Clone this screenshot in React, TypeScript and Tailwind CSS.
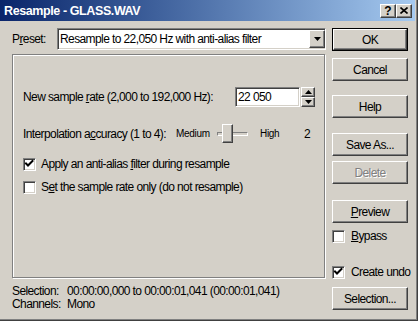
import React from 'react';

const raised =
  'border border-t-white border-l-white border-r-[#404040] border-b-[#404040] shadow-[inset_-1px_-1px_0_#808080,inset_1px_1px_0_#d4d0c8] bg-[#d4d0c8]';
const sunken =
  'border border-t-[#808080] border-l-[#808080] border-r-white border-b-white shadow-[inset_1px_1px_0_#404040,inset_-1px_-1px_0_#d4d0c8]';

const U: React.FC<{ children: React.ReactNode }> = ({ children }) => (
  <span className="underline underline-offset-[1px] decoration-1">{children}</span>
);

const Button: React.FC<{ children: React.ReactNode; className?: string; disabled?: boolean; isDefault?: boolean }> = ({
  children,
  className = '',
  disabled,
  isDefault,
}) => {
  const inner = (
    <div
      className={`${raised} flex h-full w-full items-center justify-center ${
        disabled ? 'text-[#808080] [text-shadow:1px_1px_0_#fff]' : 'text-black'
      }`}
    >
      {children}
    </div>
  );
  if (isDefault) {
    return <div className={`h-[23px] w-[76px] border border-black ${className}`}>{inner}</div>;
  }
  return <div className={`h-[23px] w-[76px] ${className}`}>{inner}</div>;
};

const Check: React.FC<{ checked?: boolean }> = ({ checked }) => (
  <div className={`${sunken} h-[13px] w-[13px] shrink-0 bg-white`}>
    {checked && (
      <svg width="11" height="11" viewBox="0 0 11 11" className="block">
        <path d="M2 4.5 L4 6.5 L8.5 2" stroke="#000" strokeWidth="2" fill="none" strokeLinecap="square" />
      </svg>
    )}
  </div>
);

const Arrow: React.FC<{ up?: boolean; size?: number }> = ({ up, size = 7 }) => {
  const h = Math.ceil(size / 2);
  return (
    <svg width={size} height={h} viewBox={`0 0 ${size} ${h}`} className="block">
      <polygon points={up ? `0,${h} ${size},${h} ${size / 2},0` : `0,0 ${size},0 ${size / 2},${h}`} fill="#000" />
    </svg>
  );
};

export default function App() {
  return (
    <div className="h-[321px] w-[418px] overflow-hidden whitespace-nowrap border-r border-b border-[#404040] bg-[#d4d0c8] pr-[2px] shadow-[inset_-1px_-1px_0_#808080] font-['Liberation_Sans',Arial,sans-serif] text-[12px] leading-[14px] tracking-[-0.6px] text-black">
      {/* Title bar */}
      <div className="flex h-[21px] items-center bg-gradient-to-r from-[#0a246a] to-[#a6caf0] pl-[4px] pr-[3px]">
        <span className="flex-1 text-[12.5px] font-bold tracking-[-0.4px] text-white">Resample - GLASS.WAV</span>
        <div className={`${raised} flex h-[14px] w-[16px] items-center justify-center text-[12px] font-bold leading-none tracking-normal`}>
          ?
        </div>
        <div className={`${raised} flex h-[14px] w-[16px] items-center justify-center`}>
          <svg width="8" height="7" viewBox="0 0 8 7">
            <path d="M0.5 0.5 L7.5 6.5 M7.5 0.5 L0.5 6.5" stroke="#000" strokeWidth="1.6" />
          </svg>
        </div>
      </div>

      <div className="flex pl-3 pt-[7px]">
        {/* Left column */}
        <div className="w-[314px]">
          <div className="flex h-[22px] items-center">
            <span className="w-[45px]">
              P<U>r</U>eset:
            </span>
            <div className={`${sunken} flex h-[22px] flex-1 items-center bg-white pl-[2px]`}>
              <span className="flex-1">Resample to 22,050 Hz with anti-alias filter</span>
              <div className={`${raised} flex h-[18px] w-[16px] items-center justify-center`}>
                <Arrow />
              </div>
            </div>
          </div>

          {/* Group panel */}
          <div className="mt-[4px] h-[224px] w-[313px] border border-[#808080] pl-[10px] pr-[9px] pt-[32px] shadow-[inset_1px_1px_0_#fff,1px_1px_0_#fff]">
            <div className="flex h-[20px] items-center">
              <span className="flex-1">
                New sample <U>r</U>ate (2,000 to 192,000 Hz):
              </span>
              <div className={`${sunken} flex h-[20px] w-[65px] items-center bg-white pl-[2px]`}>22 050</div>
              <div className="ml-[1px] flex h-[20px] w-[14px] flex-col">
                <div className={`${raised} flex h-[10px] items-center justify-center`}>
                  <Arrow up size={7} />
                </div>
                <div className={`${raised} flex h-[10px] items-center justify-center`}>
                  <Arrow size={7} />
                </div>
              </div>
            </div>

            <div className="mt-[17px] flex h-[19px] items-center">
              <span className="w-[153px]">
                Interpolation a<U>c</U>curacy (1 to 4):
              </span>
              <span className="w-[41px] text-[10px] tracking-[-0.3px]">Medium</span>
              <div className="relative h-[19px] w-[31px]">
                <div className="absolute left-0 right-0 top-[8px] h-[4px] border border-t-[#808080] border-l-[#808080] border-r-white border-b-white" />
                <div className={`${raised} absolute left-[5px] top-0 h-[19px] w-[11px]`} />
              </div>
              <span className="ml-[12px] w-[44px] text-[10px] tracking-[-0.3px]">High</span>
              <span>2</span>
            </div>

            <div className="mt-[14px] flex items-center">
              <Check checked />
              <span className="ml-[5px]">
                Apply an anti-alias <U>f</U>ilter during resample
              </span>
            </div>
            <div className="mt-[9px] flex items-center">
              <Check />
              <span className="ml-[5px]">
                S<U>e</U>t the sample rate only (do not resample)
              </span>
            </div>
          </div>

          {/* Info */}
          <div className="mt-[7px] leading-[13px]">
            <div className="flex">
              <span className="w-[55px]">Selection:</span>
              <span>00:00:00,000 to 00:00:01,041 (00:00:01,041)</span>
            </div>
            <div className="flex">
              <span className="w-[55px]">Channels:</span>
              <span>Mono</span>
            </div>
          </div>
        </div>

        {/* Right column */}
        <div className="ml-[6px] flex w-[76px] flex-col">
          <Button isDefault>OK</Button>
          <Button className="mt-[7px]">Cancel</Button>
          <Button className="mt-[14px]">Help</Button>
          <Button className="mt-[15px]">Save As...</Button>
          <Button className="mt-[5px]" disabled>
            Delete
          </Button>
          <Button className="mt-[16px]">
            <U>P</U>review
          </Button>
          <div className="mt-[6px] flex items-center">
            <Check />
            <span className="ml-[6px]">
              <U>B</U>ypass
            </span>
          </div>
          <div className="mt-[22px] flex items-center">
            <Check checked />
            <span className="ml-[6px]">Create undo</span>
          </div>
          <Button className="mt-[8px]">Selection...</Button>
        </div>
      </div>
    </div>
  );
}
